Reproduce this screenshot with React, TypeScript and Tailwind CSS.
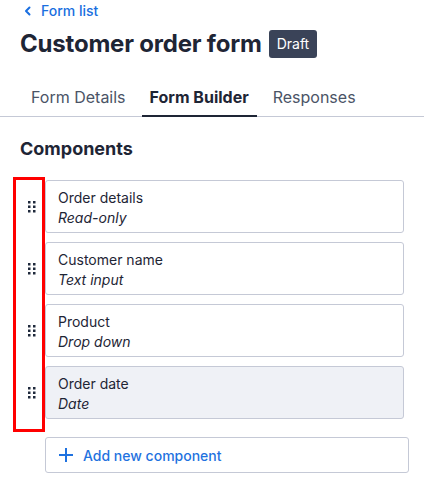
import React from "react";

function Handle() {
  return (
    <svg width="8" height="12" viewBox="0 0 8 12" className="text-[#1e293b]">
      {[0, 1, 2].map((r) =>
        [0, 1].map((c) => (
          <rect key={`${r}-${c}`} x={c * 5} y={r * 4.5} width="2.5" height="2.5" fill="currentColor" />
        ))
      )}
    </svg>
  );
}

const items = [
  { name: "Order details", type: "Read-only", active: false },
  { name: "Customer name", type: "Text input", active: false },
  { name: "Product", type: "Drop down", active: false },
  { name: "Order date", type: "Date", active: true },
];

export default function App() {
  return (
    <div className="w-[424px] h-[497px] bg-white overflow-hidden text-[#1e2535]" style={{ fontFamily: "Inter, 'Noto Sans', sans-serif" }}>
      <div className="px-5 pt-[2px]">
        <a className="flex items-center gap-[9px] pl-[4px] text-[#1a6fe0] text-[14px] leading-[18px] font-medium">
          <svg width="8" height="10" viewBox="0 0 8 10" fill="none" stroke="currentColor" strokeWidth="2" strokeLinecap="round" strokeLinejoin="round">
            <path d="M5.5 1.5 L2 5 L5.5 8.5" />
          </svg>
          <span>Form list</span>
        </a>
        <div className="mt-[8px] flex items-center gap-[7px]">
          <h1 className="text-[24px] leading-[32px] font-bold tracking-[-0.2px]">Customer order form</h1>
          <span className="h-[28px] px-[8px] rounded-[3px] bg-[#3a4358] text-white text-[14px] leading-[28px]">Draft</span>
        </div>
      </div>
      <div className="mt-[26px] border-b border-[#c5c9d6] flex pl-[23px] gap-2">
        <div className="px-2 pb-[8px] text-[16px] leading-[22px] text-[#4b5466]">Form Details</div>
        <div className="px-2 pb-[6px] text-[16px] leading-[22px] font-bold text-[#1e2535] border-b-2 border-[#1e2535] -mb-px">Form Builder</div>
        <div className="px-2 pb-[8px] text-[16px] leading-[22px] text-[#4b5466]">Responses</div>
      </div>
      <div className="px-5 pt-[20px]">
        <h2 className="text-[18px] leading-[24px] font-bold">Components</h2>
      </div>
      <div className="relative mt-[19px] pl-[13px] pr-[20px]">
        <div className="absolute left-[13px] top-[-3px] w-[32px] h-[255px] border-[3px] border-[#ff0000] pointer-events-none" />
        <div className="flex flex-col gap-[9px]">
          {items.map((it) => (
            <div key={it.name} className="flex items-center">
              <div className="w-[32px] flex justify-center pl-[5px]">
                <Handle />
              </div>
              <div className={`flex-1 h-[53px] rounded-[3px] border border-[#c5c9d6] px-[12px] pt-[7px] ${it.active ? "bg-[#eff1f6]" : "bg-white"}`}>
                <div className="text-[14px] leading-[20px]">{it.name}</div>
                <div className="text-[14px] leading-[20px] italic">{it.type}</div>
              </div>
            </div>
          ))}
        </div>
        <div className="mt-[18px] ml-[32px] mr-[-5px] h-[36px] rounded-[3px] border border-[#c5c9d6] flex items-center pl-[13px] gap-[10px] text-[#1f72e0] text-[14px] font-medium">
          <svg width="14" height="14" viewBox="0 0 14 14" stroke="currentColor" strokeWidth="2" strokeLinecap="square">
            <path d="M7 1 V13 M1 7 H13" />
          </svg>
          <span>Add new component</span>
        </div>
      </div>
    </div>
  );
}
